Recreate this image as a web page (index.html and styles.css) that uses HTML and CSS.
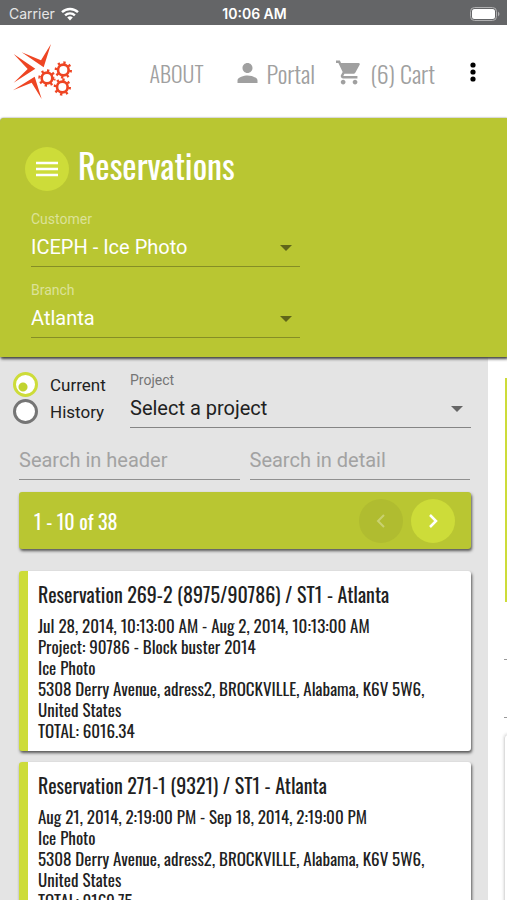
FILE: index.html
```html
<!DOCTYPE html>
<html lang="en">
<head>
<meta charset="utf-8">
<meta name="viewport" content="width=device-width, initial-scale=1">
<title>Reservations</title>
<link rel="stylesheet" href="styles.css">
</head>
<body>
<div class="app">
  <div class="status">
    <span class="carrier">Carrier
      <svg class="wifi" viewBox="0 0 18 14" aria-hidden="true"><g fill="none" stroke="#fff" stroke-width="2.4"><path d="M1 5.2a11.6 11.6 0 0 1 16 0"/><path d="M4.1 8.4a7 7 0 0 1 9.8 0"/></g><path fill="#fff" d="M6.2 10.6a4 4 0 0 1 5.6 0L9 13.6z"/></svg>
    </span>
    <span class="clock">10:06 AM</span>
    <svg class="battery" viewBox="0 0 30 14" aria-hidden="true"><rect x=".5" y=".5" width="26" height="13" rx="4" fill="none" stroke="#b0b0b1"/><rect x="2" y="2" width="23" height="10" rx="2.5" fill="#fff"/><path fill="#b0b0b1" d="M28 4.5q3 2.5 0 5z"/></svg>
  </div>

  <header class="topbar">
    <svg class="logo" viewBox="0 0 180 168" role="img" aria-label="Home">
      <g fill="#ee4523"><path d="M26 25 84 49 114 0 92 70z"/><path d="M2 30 67 74 2 116 44 75z"/><path d="M0 139 65 98 86 165 56 116z"/></g>
      <g fill="none" stroke="#ee4523">
        <g stroke-width="8"><circle cx="102" cy="102" r="16"/><circle cx="151" cy="78" r="16"/><circle cx="148" cy="129" r="16"/></g>
        <g stroke-width="8"><circle cx="102" cy="102" r="22" pathLength="80" stroke-dasharray="4 6"/><circle cx="151" cy="78" r="22" pathLength="80" stroke-dasharray="4 6"/><circle cx="148" cy="129" r="22" pathLength="80" stroke-dasharray="4 6"/></g>
      </g>
    </svg>
    <nav class="nav">
      <a class="about" href="#about">ABOUT</a>
      <a href="#portal"><svg class="person" viewBox="4 4 16 16" aria-hidden="true"><path d="M12 12c2.21 0 4-1.79 4-4s-1.79-4-4-4-4 1.79-4 4 1.79 4 4 4zm0 2c-2.67 0-8 1.34-8 4v2h16v-2c0-2.66-5.33-4-8-4z"/></svg>Portal</a>
      <a href="#cart"><svg class="cart" viewBox="1 2 21 20" aria-hidden="true"><path d="M7 18c-1.1 0-1.99.9-1.99 2S5.9 22 7 22s2-.9 2-2-.9-2-2-2zM1 2v2h2l3.6 7.59-1.35 2.45c-.16.28-.25.61-.25.96 0 1.1.9 2 2 2h12v-2H7.42c-.14 0-.25-.11-.25-.25l.03-.12.9-1.63h7.45c.75 0 1.41-.41 1.75-1.03l3.58-6.49A1 1 0 0 0 20 4H5.21l-.94-2H1zm16 16c-1.1 0-1.99.9-1.99 2s.89 2 1.99 2 2-.9 2-2-.9-2-2-2z"/></svg>(6) Cart</a>
    </nav>
    <button class="more" type="button" aria-label="More"><svg viewBox="0 0 6 20" aria-hidden="true"><circle cx="3" cy="3" r="2.6"/><circle cx="3" cy="10" r="2.6"/><circle cx="3" cy="17" r="2.6"/></svg></button>
  </header>

  <section class="hero">
    <div class="heading">
      <button class="round" type="button" aria-label="Menu"><svg class="bars" viewBox="0 0 24 16" aria-hidden="true"><path d="M1 2h22M1 8h22M1 14h22"/></svg></button>
      <h1>Reservations</h1>
    </div>
    <div class="field light">
      <label for="customer">Customer</label>
      <div class="pick"><select id="customer"><option>ICEPH - Ice Photo</option></select></div>
    </div>
    <div class="field light">
      <label for="branch">Branch</label>
      <div class="pick"><select id="branch"><option>Atlanta</option></select></div>
    </div>
  </section>

  <div class="content">
    <main class="panel">
      <div class="filters">
        <div class="radios">
          <label><input type="radio" name="period" checked>Current</label>
          <label><input type="radio" name="period">History</label>
        </div>
        <div class="field project">
          <label for="project">Project</label>
          <div class="pick"><select id="project"><option>Select a project</option></select></div>
        </div>
      </div>
      <div class="searches">
        <input type="text" placeholder="Search in header" aria-label="Search in header">
        <input type="text" placeholder="Search in detail" aria-label="Search in detail">
      </div>
      <div class="pager">
        <span>1 - 10 of 38</span>
        <button class="round" type="button" disabled aria-label="Previous page"><svg class="chev" viewBox="0 0 10 16" aria-hidden="true"><path d="M8 2 2 8l6 6"/></svg></button>
        <button class="round" type="button" aria-label="Next page"><svg class="chev" viewBox="0 0 10 16" aria-hidden="true"><path d="m2 2 6 6-6 6"/></svg></button>
      </div>
      <div class="cards">
        <article class="card">
          <h2>Reservation 269-2 (8975/90786) / ST1 - Atlanta</h2>
          <p>Jul 28, 2014, 10:13:00 AM - Aug 2, 2014, 10:13:00 AM</p>
          <p>Project: 90786 - Block buster 2014</p>
          <p>Ice Photo</p>
          <p>5308 Derry Avenue, adress2, BROCKVILLE, Alabama, K6V 5W6,<br>United States</p>
          <p>TOTAL: 6016.34</p>
        </article>
        <article class="card">
          <h2>Reservation 271-1 (9321) / ST1 - Atlanta</h2>
          <p>Aug 21, 2014, 2:19:00 PM - Sep 18, 2014, 2:19:00 PM</p>
          <p>Ice Photo</p>
          <p>5308 Derry Avenue, adress2, BROCKVILLE, Alabama, K6V 5W6,<br>United States</p>
          <p>TOTAL: 9169.75</p>
        </article>
      </div>
    </main>
    <aside class="next">
      <div class="next-head"></div>
      <div class="next-line"></div>
      <div class="next-line"></div>
      <div class="next-card"></div>
    </aside>
  </div>
</div>
</body>
</html>
```

FILE: styles.css
```css
:root {
  --olive: #b9c632;
  --lime: #cddc39;
  --narrow: Oswald, "Liberation Sans Narrow", "Liberation Sans", sans-serif;
}
* { box-sizing: border-box; }
body { margin: 0; font-family: Roboto, "Liberation Sans", sans-serif; color: #212121; }
button, input, select { font: inherit; }
h1, h2, p { margin: 0; font-weight: 400; }
.app { height: 100vh; overflow: hidden; display: flex; flex-direction: column; background: #fff; }

.status { flex: none; height: 25px; padding: 2px 7px 0 9px; display: grid; grid-template-columns: 1fr auto 1fr; align-items: center; background: #646567; color: #fff; font: 14px Inter, sans-serif; }
.carrier { display: flex; align-items: center; gap: 6px; color: #e6e6e6; }
.wifi { width: 18px; height: 14px; }
.clock { font-weight: 600; }
.battery { width: 30px; height: 14px; justify-self: end; }

.topbar { flex: none; height: 93px; padding: 0 28px 0 13px; display: flex; align-items: center; }
.logo { width: 60px; height: 56px; }
.nav { flex: 1; display: flex; justify-content: flex-end; align-items: center; gap: 21px; margin: 2px 32px 0 0; }
.nav a { display: flex; align-items: center; color: #a0a0a0; text-decoration: none; font: 300 24px/32px var(--narrow); }
.nav .about { font-size: 22px; margin-right: 12px; }
.nav svg { fill: #a0a0a0; }
.person { width: 21px; height: 20px; margin-right: 9px; }
.cart { width: 25px; height: 25px; margin-right: 9px; }
.more { border: 0; padding: 0; background: none; width: 12px; height: 32px; display: flex; align-items: center; justify-content: center; }
.more svg { width: 6px; height: 20px; }

.hero { flex: none; position: relative; height: 239px; padding: 24px 32px 0 25px; background: var(--olive); color: #fff; border-radius: 4px 0 0 0; box-shadow: 1px 2px 3px #444, 0 0 2px #888; }
.heading { display: flex; align-items: center; gap: 9px; height: 54px; margin-bottom: 14px; }
.heading h1 { font: 34px/46px var(--narrow); margin-bottom: 8px; }
.round { flex: none; width: 44px; height: 44px; padding: 0; border: 0; border-radius: 50%; background: var(--lime); display: flex; align-items: center; justify-content: center; }
.round svg { fill: none; stroke: #fff; stroke-width: 2.5; }
.round:disabled { background: #b0bc30; }
.round:disabled svg { stroke: #c9d170; stroke-width: 2; }
.bars { width: 24px; height: 16px; }
.chev { width: 10px; height: 16px; }

.field label { display: block; font-size: 14px; line-height: 18px; color: #757575; }
.light { width: 269px; margin: 0 0 14px 6px; }
.light label { color: #dce298; }
.pick { position: relative; border-bottom: 1px solid #858585; }
.light .pick { border-color: #858e26; }
.pick::after { content: ""; position: absolute; right: 8px; top: 17px; border: 6px solid transparent; border-top-color: #666; border-bottom: 0; pointer-events: none; }
.light .pick::after { border-top-color: #606619; }
.pick select { appearance: none; display: block; width: 100%; height: 38px; padding: 0 24px 0 0; border: 0; border-radius: 0; background: none; color: inherit; font-size: 20px; outline: 0; }

.content { flex: 1; min-height: 0; display: flex; }
.panel { flex: 1; min-width: 0; background: #e4e4e4; padding: 14px 17px 0 13px; }
.filters { display: flex; }
.radios { width: 117px; flex: none; font-size: 17px; }
.radios label { display: flex; align-items: center; gap: 12px; height: 27px; }
.radios input { appearance: none; flex: none; margin: 0; width: 25px; height: 25px; border: 3px solid #757575; border-radius: 50%; background: #fff; }
.radios input:checked { border-color: var(--lime); background: radial-gradient(circle at 7px 12px, #c1d32f 4px, #fff 5px); }
.project { flex: 1; }
.searches { display: flex; gap: 10px; margin: 12px 1px 0 6px; }
.searches input { flex: 1; min-width: 0; height: 40px; padding: 0; border: 0; border-bottom: 1px solid #909090; border-radius: 0; background: none; outline: 0; font-size: 20px; color: #212121; }
.searches input::placeholder { color: #a2a2a2; opacity: 1; }
.pager { display: flex; align-items: center; gap: 8px; height: 57px; margin: 12px 0 22px 6px; padding: 0 16px 0 15px; background: var(--olive); color: #fff; font: 20px/28px var(--narrow); border-radius: 3px; box-shadow: 1px 2px 3px #555; }
.pager span { flex: 1; }
.cards { display: grid; gap: 11px; margin-left: 6px; }
.card { background: #fff; border-left: 9px solid var(--lime); border-radius: 3px; padding: 8px 10px 10px; box-shadow: 1px 2px 3px #555; font: 17px/21px var(--narrow); }
.card h2 { font: 20px/30px var(--narrow); margin-bottom: 6px; }
.card p { white-space: nowrap; }

.next { flex: none; width: 19px; padding: 21px 0 0 16px; overflow: hidden; }
.next-head { height: 224px; margin-left: 1px; background: var(--lime); }
.next-line { height: 58px; border-bottom: 1px solid #999; }
.next-card { height: 400px; width: 100px; margin-top: 16px; border: 1px solid #ddd; border-radius: 4px; box-shadow: 0 0 3px #ccc; }
```
